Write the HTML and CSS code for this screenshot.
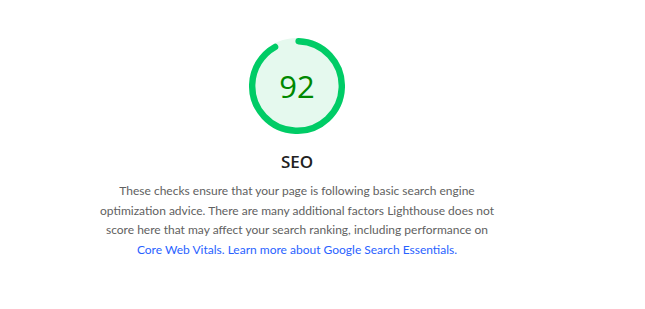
FILE: index.html
```html
<!DOCTYPE html>
<html lang="en">
<head>
<meta charset="utf-8">
<title>SEO</title>
<link rel="stylesheet" href="styles.css">
</head>
<body>
<div class="page">
  <div class="category-header">
    <div class="gauge">
      <svg class="gauge-svg" viewBox="0 0 120 120" width="96" height="96">
        <circle class="gauge-base" cx="60" cy="60" r="56" stroke-width="8"></circle>
        <circle class="gauge-arc" cx="60" cy="60" r="56" stroke-width="8" fill="none" stroke-linecap="round" stroke-dasharray="320.7 351.86" transform="rotate(-87.95 60 60)"></circle>
      </svg>
      <div class="gauge-percentage">92</div>
    </div>
    <div class="gauge-label">SEO</div>
    <div class="description">These checks ensure that your page is following basic search engine optimization advice. There are many additional factors Lighthouse does not score here that may affect your search ranking, including performance on <a href="#">Core Web Vitals.</a> <a href="#">Learn more about Google Search Essentials.</a></div>
  </div>
</div>
</body>
</html>
```
FILE: styles.css
```css
html, body {
  margin: 0;
  padding: 0;
  background: #fff;
}
body {
  font-family: "Open Sans", "Noto Sans", sans-serif;
  color: #212121;
}
.page {
  width: 594px;
  padding-top: 38px;
}
.category-header {
  display: flex;
  flex-direction: column;
  align-items: center;
}
.gauge {
  position: relative;
  width: 96px;
  height: 96px;
}
.gauge-svg {
  display: block;
}
.gauge-base {
  fill: #e5f9ee;
  stroke: #e5f9ee;
}
.gauge-arc {
  stroke: #00cc66;
}
.gauge-percentage {
  position: absolute;
  left: 0;
  right: 0;
  top: 0;
  bottom: 0;
  display: flex;
  align-items: center;
  justify-content: center;
  font-size: 31px;
  color: #008800;
  line-height: 1;
}
.gauge-label {
  margin-top: 16px;
  font-size: 17px;
  font-weight: 600;
  line-height: 24px;
  color: #212121;
}
.description {
  margin-top: 7px;
  max-width: 402px;
  text-align: center;
  font-family: "Lato", "Open Sans", sans-serif;
  font-size: 12px;
  line-height: 19.5px;
  color: #616161;
}
.description a {
  color: #2962ff;
  text-decoration: none;
}
```
